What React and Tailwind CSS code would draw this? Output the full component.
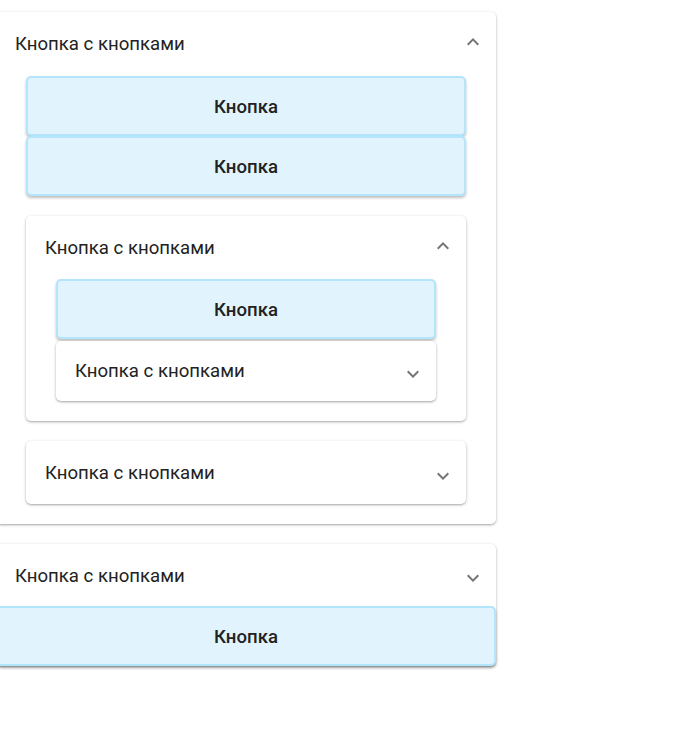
import { useState } from "react";

function Chevron({ open }) {
  return (
    <svg
      viewBox="0 0 24 24"
      className={
        open
          ? "w-6 h-6 rotate-180 -translate-y-[2px] text-[#757575]"
          : "w-6 h-6 translate-y-[3px] text-[#757575]"
      }
      fill="currentColor"
    >
      <path d="M16.59 8.59 12 13.17 7.41 8.59 6 10l6 6 6-6z" />
    </svg>
  );
}

function Knopka() {
  return (
    <button className="w-full h-[60px] pt-1 bg-[#e1f3fd] border-2 border-[#b3e5fc] rounded-[5px] text-[18.6px] font-medium text-[#222] shadow-[0_2px_3px_rgba(0,0,0,0.25)]">
      Кнопка
    </button>
  );
}

function Panel({ title, defaultOpen, children, headerH = "h-[64px]", collapsedH = "h-[62px]" }) {
  const [open, setOpen] = useState(defaultOpen);
  return (
    <div className="bg-white rounded-[5px] shadow-[0_1px_3px_rgba(0,0,0,0.3),0_1px_1px_rgba(0,0,0,0.08)]">
      <div
        onClick={() => setOpen(!open)}
        className={
          "flex items-center justify-between pl-[19px] pr-[11px] cursor-pointer " +
          (open ? headerH : collapsedH)
        }
      >
        <span className="text-[18.6px] text-[#222] translate-y-px">{title}</span>
        <Chevron open={open} />
      </div>
      {open && <div className="px-[30px] pb-5 flex flex-col">{children}</div>}
    </div>
  );
}

export default function App() {
  const [open1, setOpen1] = useState(true);
  const [open2, setOpen2] = useState(false);

  return (
    <div className="min-h-screen bg-white pt-3 font-['Roboto',sans-serif]">
      <div className="w-[500px] -ml-1 flex flex-col gap-5">
        <div className="bg-white rounded-[5px] shadow-[0_1px_3px_rgba(0,0,0,0.3),0_1px_1px_rgba(0,0,0,0.08)]">
          <div
            onClick={() => setOpen1(!open1)}
            className="h-[64px] flex items-center justify-between pl-[19px] pr-[11px] cursor-pointer"
          >
            <span className="text-[18.6px] text-[#222] translate-y-px">Кнопка с кнопками</span>
            <Chevron open={open1} />
          </div>
          {open1 && (
            <div className="px-[30px] pb-5 flex flex-col">
              <Knopka />
              <Knopka />
              <div className="mt-5 flex flex-col gap-5">
                <Panel title="Кнопка с кнопками" defaultOpen headerH="h-[63px]">
                  <Knopka />
                  <div className="mt-0.5">
                    <Panel title="Кнопка с кнопками" defaultOpen={false} collapsedH="h-[60px]" />
                  </div>
                </Panel>
                <Panel title="Кнопка с кнопками" defaultOpen={false} collapsedH="h-[63px]" />
              </div>
            </div>
          )}
        </div>

        <div className="bg-white rounded-[5px] shadow-[0_1px_3px_rgba(0,0,0,0.3),0_1px_1px_rgba(0,0,0,0.08)]">
          <div
            onClick={() => setOpen2(!open2)}
            className="h-[62px] flex items-center justify-between pl-[19px] pr-[11px] cursor-pointer"
          >
            <span className="text-[18.6px] text-[#222] translate-y-[2px]">Кнопка с кнопками</span>
            <Chevron open={open2} />
          </div>
          <Knopka />
        </div>
      </div>
    </div>
  );
}
